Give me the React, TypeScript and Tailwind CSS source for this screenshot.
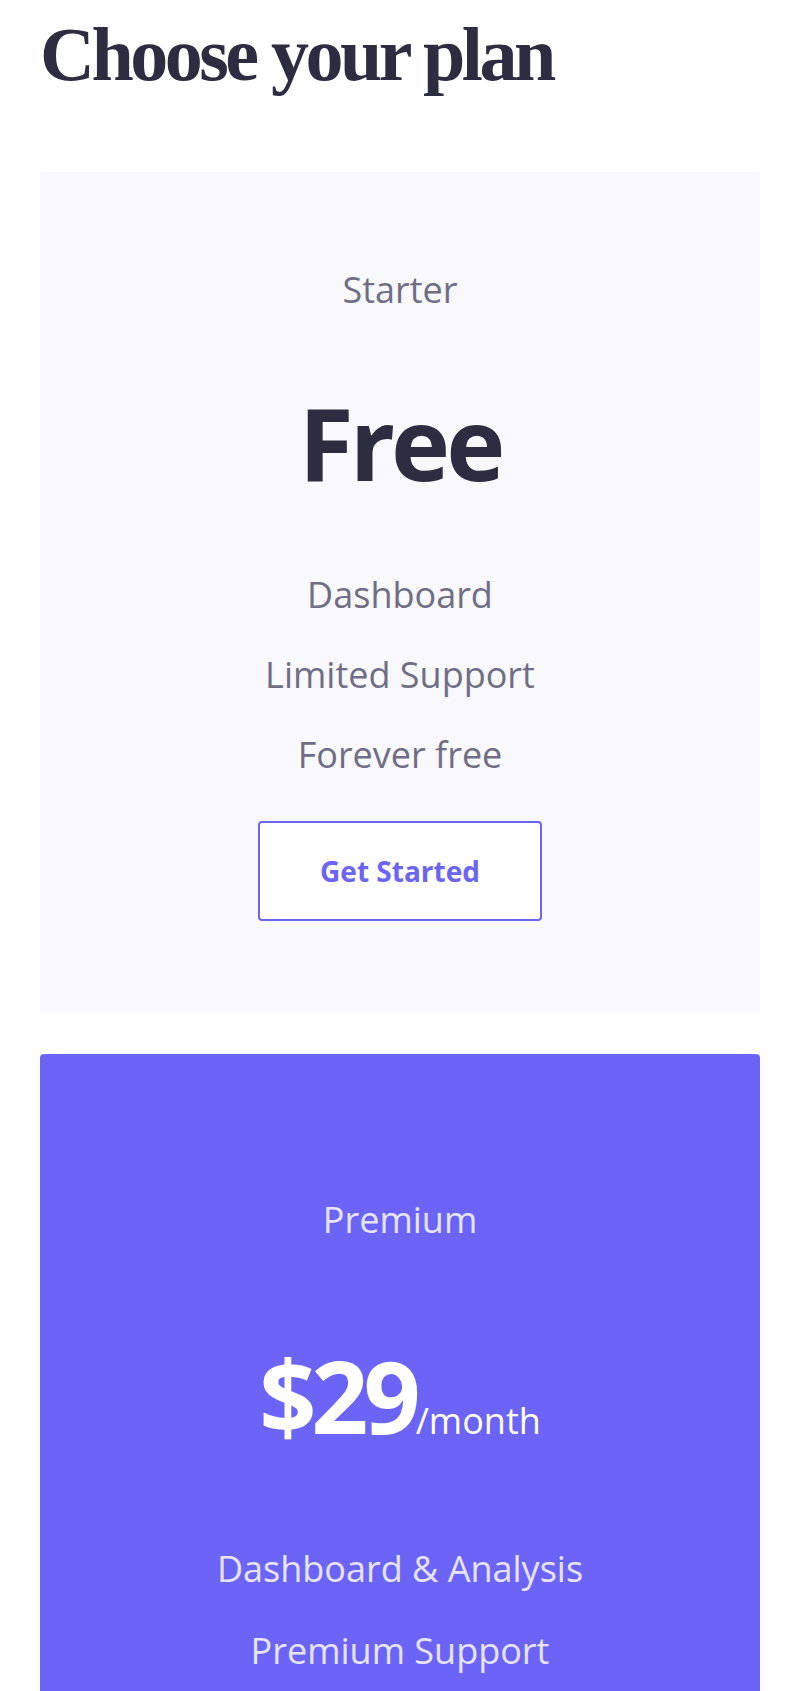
const plans = [
  {
    name: "Starter",
    price: "Free",
    period: "",
    features: ["Dashboard", "Limited Support", "Forever free"],
    featured: false,
  },
  {
    name: "Premium",
    price: "$29",
    period: "/month",
    features: ["Dashboard & Analysis", "Premium Support", "Cancel anytime"],
    featured: true,
  },
];

function PlanCard({ plan }: { plan: (typeof plans)[number] }) {
  if (plan.featured) {
    return (
      <div className="flex flex-col items-center rounded-[4px] bg-[#6c64f6] pt-[142px] pb-[92px] text-center">
        <p className="text-[36px] leading-[48px] text-[#e6e4fd]">{plan.name}</p>
        <div className="mt-[101px] flex items-baseline">
          <span className="text-[100px] leading-[100px] font-bold tracking-[-5px] text-white">{plan.price}</span>
          <span className="text-[36px] leading-[48px] text-white">{plan.period}</span>
        </div>
        <ul className="mt-[100px] flex flex-col gap-[34px]">
          {plan.features.map((f) => (
            <li key={f} className="text-[36px] leading-[48px] text-[#e6e4fd]">
              {f}
            </li>
          ))}
        </ul>
        <button className="mt-[43px] h-[100px] w-[284px] rounded-[4px] border-2 border-white bg-white text-[28px] font-bold text-[#6c64f6]">
          Get Started
        </button>
      </div>
    );
  }

  return (
    <div className="flex flex-col items-center rounded-[4px] bg-[#f8f8fd] pt-[94px] pb-[92px] text-center">
      <p className="text-[36px] leading-[48px] text-[#6f6e84]">{plan.name}</p>
      <p className="mt-[78px] text-[100px] leading-[100px] font-bold tracking-[-4px] text-[#2e2c40]">{plan.price}</p>
      <ul className="mt-[79px] flex flex-col gap-[32px]">
        {plan.features.map((f) => (
          <li key={f} className="text-[36px] leading-[48px] text-[#6f6e84]">
            {f}
          </li>
        ))}
      </ul>
      <button className="mt-[42px] h-[100px] w-[284px] rounded-[4px] border-2 border-[#6c64f6] bg-white text-[28px] font-bold text-[#6c64f6]">
        Get Started
      </button>
    </div>
  );
}

export default function App() {
  return (
    <div className="min-h-screen bg-white font-['Open_Sans',sans-serif]">
      <div className="ml-[40px] w-[720px]">
        <h1 className="font-['Liberation_Serif',serif] text-[76px] leading-[108px] font-bold tracking-[-3.5px] text-[#2e2c40]">
          Choose your plan
        </h1>
        <div className="mt-[64px] flex flex-col gap-[41px]">
          {plans.map((p) => (
            <PlanCard key={p.name} plan={p} />
          ))}
        </div>
      </div>
    </div>
  );
}
